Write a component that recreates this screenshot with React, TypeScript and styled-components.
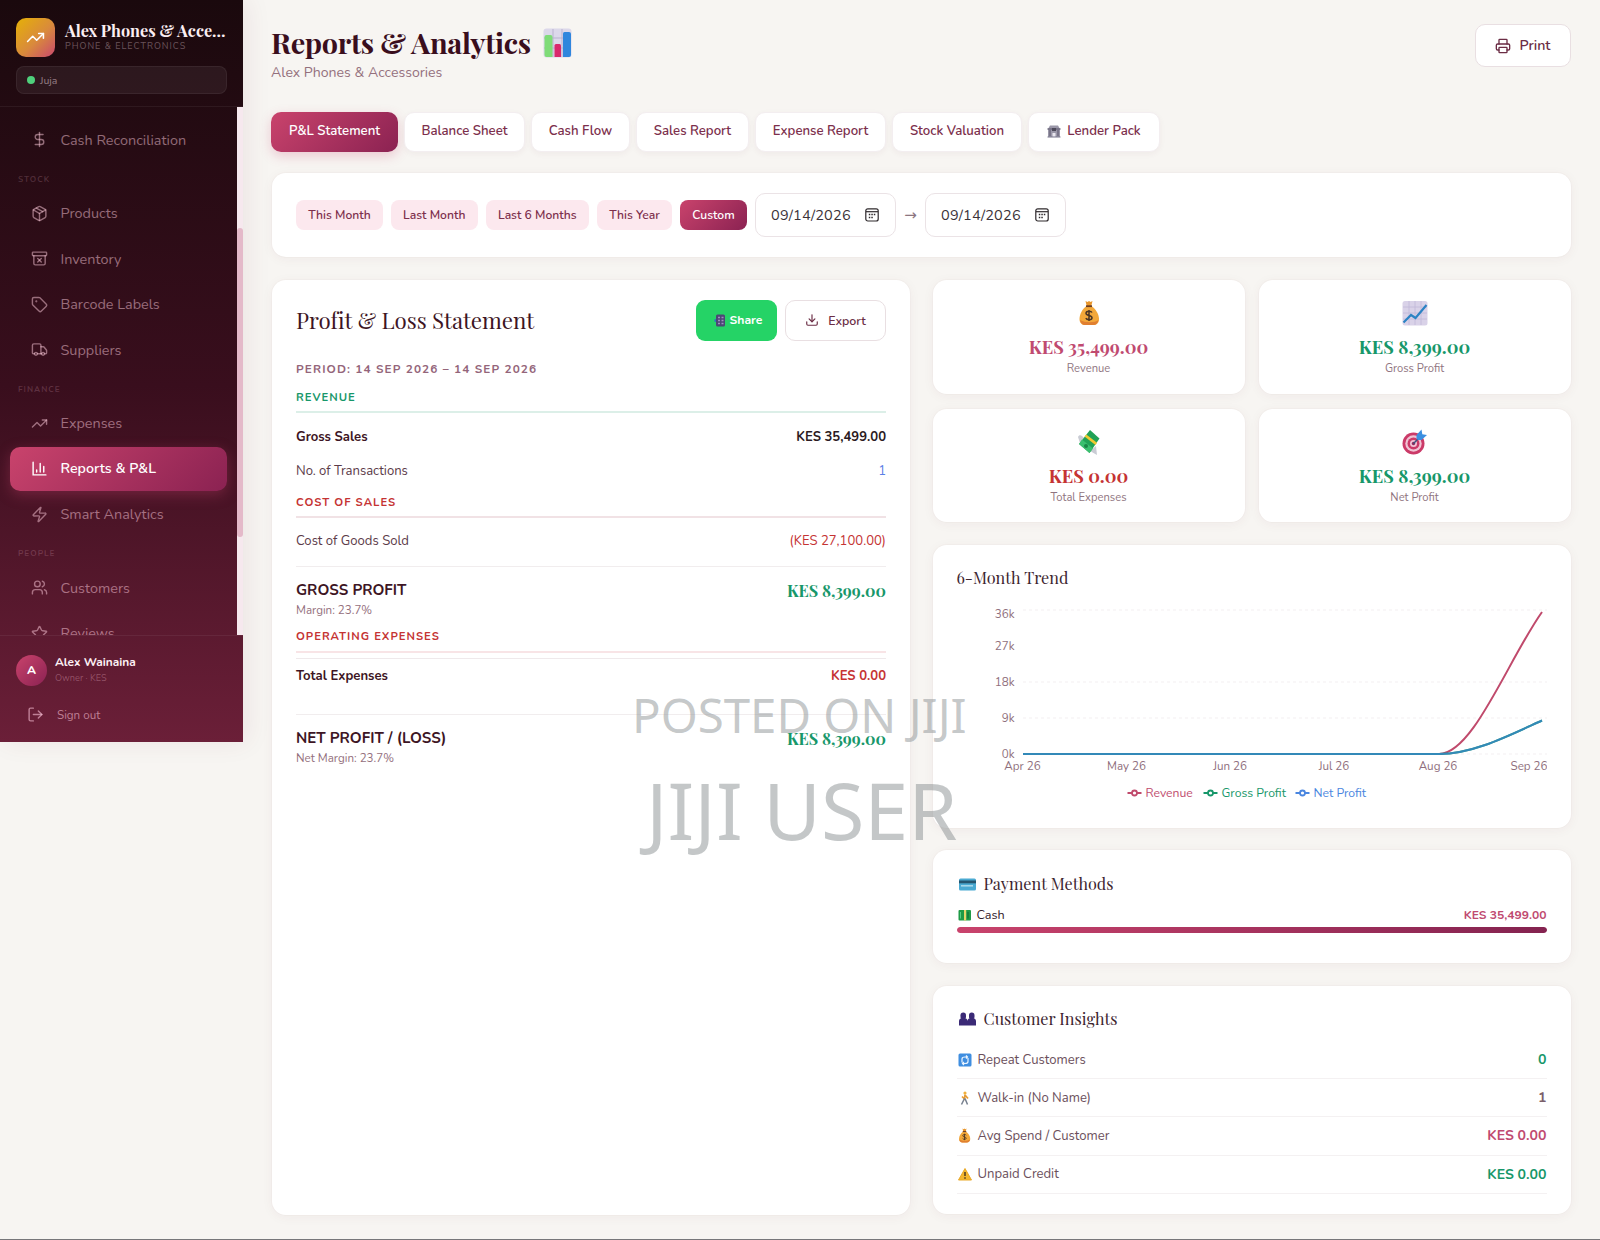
import React from 'react';
import styled, { createGlobalStyle, css } from 'styled-components';
import {
    ArchiveX, DollarSign, Download, LogOut, Package, Printer, Star, Tag, TrendingUp, Truck, Users, Zap
} from 'lucide-react';

const sans = `Nunito, Lato, "Open Sans", sans-serif`;
const serif = `"Playfair Display", "Liberation Serif", serif`;

const GlobalStyle = createGlobalStyle`
    * { box-sizing: border-box; }
    body {
        margin: 0;
        background: #f7f5f2;
        font-family: ${sans};
        color: #3d1524;
    }
    button { font-family: inherit; cursor: pointer; }
    h1, h2, h3, p { margin: 0; }
    svg { display: block; flex: none; }
`;

const Page = styled.div`
    display: flex;
    align-items: flex-start;
    width: 1600px;
    height: 1240px;
    overflow: hidden;
    position: relative;
    border-bottom: 1px solid #77777a;
`;

/* ---------- Sidebar ---------- */

const Sidebar = styled.aside`
    width: 242.5px;
    height: 742px;
    flex: none;
    display: flex;
    flex-direction: column;
    background: linear-gradient(180deg, #1a090d 0%, #390e1d 52%, #6b1f38 100%);
    box-shadow: 4px 0 24px rgba(107, 31, 56, 0.08);
`;

const Brand = styled.div`
    height: 107px;
    flex: none;
    padding: 18px 15.5px 0 16px;
    border-bottom: 1px solid rgba(255, 255, 255, 0.06);
`;

const BrandRow = styled.div`
    display: flex;
    gap: 10px;
    height: 39px;
`;

const Logo = styled.div`
    width: 39px;
    height: 39px;
    flex: none;
    border-radius: 10px;
    display: flex;
    align-items: center;
    justify-content: center;
    color: #fff;
    background: linear-gradient(135deg, #e3aa10 10%, #d98a3c 55%, #c9486e 100%);
`;

const BrandName = styled.div`
    font: 700 16.2px/21px ${serif};
    color: #fbeef2;
    padding-top: 2px;
    white-space: nowrap;
`;

const BrandKind = styled.div`
    font-size: 9px;
    line-height: 10px;
    letter-spacing: 1px;
    color: rgba(255, 225, 235, 0.35);
    white-space: nowrap;
`;

const Branch = styled.div`
    height: 28px;
    margin-top: 9px;
    padding: 0 10px;
    display: flex;
    align-items: center;
    gap: 5px;
    border: 1px solid rgba(255, 255, 255, 0.06);
    border-radius: 8px;
    background: rgba(255, 255, 255, 0.06);
    color: rgba(255, 225, 235, 0.5);
    font-size: 10.5px;
`;

const Dot = styled.i`
    width: 8px;
    height: 8px;
    border-radius: 50%;
    background: #4fd07c;
`;

const NavScroll = styled.div`
    height: 528px;
    display: flex;
    overflow: hidden;
`;

const Nav = styled.nav`
    flex: 1;
    padding: 11px 9px 0 10px;
`;

const ScrollTrack = styled.div`
    width: 5.5px;
    padding-top: 121px;
    background: #f6e8ee;
`;

const ScrollThumb = styled.div`
    height: 309px;
    border-radius: 3px;
    background: #e4b9c9;
`;

const NavGroup = styled.div`
    height: 28px;
    padding: 10px 8px 0;
    font-size: 8.2px;
    font-weight: 700;
    line-height: 12px;
    letter-spacing: 1px;
    color: rgba(255, 200, 220, 0.19);
`;

const NavItem = styled.a<{ $active?: boolean }>`
    display: flex;
    align-items: center;
    gap: 12.5px;
    height: 43.5px;
    margin-bottom: 2px;
    padding: 0 21px;
    width: 217px;
    border-radius: 10px;
    font-size: 14.4px;
    color: rgba(255, 205, 222, 0.5);
    ${p => p.$active && css`
        color: #fff;
        font-size: 14.2px;
        font-weight: 600;
        background: linear-gradient(135deg, #c9436c 0%, #8b2252 100%);
        box-shadow: 0 4px 14px rgba(201, 67, 108, 0.35);
    `}
`;

const UserBox = styled.div`
    flex: 1;
    padding: 18px 16px 0;
    border-top: 1px solid rgba(255, 255, 255, 0.06);
`;

const UserRow = styled.div`
    display: flex;
    align-items: center;
    gap: 8px;
    height: 32px;
`;

const Avatar = styled.div`
    width: 31px;
    height: 31px;
    border-radius: 50%;
    display: flex;
    align-items: center;
    justify-content: center;
    background: linear-gradient(135deg, #c9436c, #8b2252);
    color: #fff;
    font-size: 12px;
    font-weight: 800;
`;

const UserName = styled.div`
    font-size: 11.9px;
    font-weight: 700;
    line-height: 17px;
    color: #fdf0f4;
`;

const UserRole = styled.div`
    font-size: 9.2px;
    line-height: 15px;
    color: rgba(255, 200, 220, 0.33);
`;

const SignOut = styled.div`
    display: flex;
    align-items: center;
    gap: 13px;
    margin-top: 18.5px;
    padding-left: 11px;
    font-size: 11.6px;
    height: 20px;
    color: rgba(255, 200, 220, 0.58);
`;

/* ---------- Main ---------- */

const Main = styled.main`
    flex: 1;
    padding: 24px 29px 0 28.5px;
`;

const PageHead = styled.header`
    display: flex;
    justify-content: space-between;
    height: 88px;
`;

const Title = styled.h1`
    display: flex;
    align-items: center;
    gap: 12px;
    height: 37px;
    font: 700 28.8px/37px ${serif};
    letter-spacing: -0.3px;
    color: #3a0e1d;
`;

const Subtitle = styled.p`
    font-size: 14.1px;
    line-height: 23px;
    color: #94707d;
`;

const OutlineButton = styled.button<{ $w: number; $h: number }>`
    width: ${p => p.$w}px;
    height: ${p => p.$h}px;
    display: flex;
    align-items: center;
    justify-content: center;
    gap: ${p => (p.$h > 42 ? 8 : 9)}px;
    border: 1px solid #e9dfe2;
    border-radius: 10px;
    background: #fff;
    color: #6b2d45;
    font-size: ${p => (p.$h > 42 ? 14.2 : 12.4)}px;
    font-weight: 600;
`;

const Tabs = styled.div`
    display: flex;
    gap: 6px;
    height: 39.5px;
`;

const Tab = styled.button<{ $w: number; $active?: boolean }>`
    width: ${p => p.$w}px;
    display: flex;
    align-items: center;
    justify-content: center;
    gap: 6px;
    padding: 0 0 2px;
    border: 1px solid #f3eef0;
    border-radius: 10px;
    background: #fff;
    color: #7c2f4c;
    font-size: 13.2px;
    font-weight: 600;
    white-space: nowrap;
    box-shadow: 0 2px 6px rgba(107, 31, 56, 0.05);
    ${p => p.$active && css`
        border: 0;
        color: #fff;
        background: linear-gradient(135deg, #c9436c 0%, #8b2252 100%);
        box-shadow: 0 4px 12px rgba(201, 67, 108, 0.25);
    `}
`;

const Card = styled.section`
    background: #fff;
    border-radius: 14px;
    box-shadow: 0 0 0 1px rgba(107, 31, 56, 0.02), 0 2px 12px rgba(107, 31, 56, 0.05);
`;

const FilterBar = styled(Card)`
    display: flex;
    align-items: center;
    height: 84px;
    margin: 21.5px 0 22.5px 1px;
    padding: 0 24px;
`;

const Chip = styled.button<{ $w: number; $active?: boolean }>`
    width: ${p => p.$w}px;
    height: 30px;
    margin-right: 8px;
    padding: 0;
    border: 0;
    border-radius: 8px;
    background: ${p => (p.$active ? 'linear-gradient(135deg, #c9436c, #8b2252)' : '#fce8ee')};
    color: ${p => (p.$active ? '#fff' : '#7c2f4c')};
    font-size: 12.1px;
    font-weight: 600;
    white-space: nowrap;
`;

const DateBox = styled.div`
    width: 141px;
    height: 44px;
    display: flex;
    align-items: center;
    justify-content: space-between;
    padding: 0 16px 0 15px;
    border: 1px solid #ebe3e6;
    border-radius: 10px;
    color: #3b3238;
    font-size: 14.5px;
    letter-spacing: 0.2px;
`;

const Arrow = styled.span`
    width: 29px;
    text-align: center;
    font: 15px/1 "DejaVu Sans", sans-serif;
    color: #8c7580;
`;

const Columns = styled.div`
    display: grid;
    grid-template-columns: 638px 638px;
    gap: 22.5px;
    margin-left: 1px;
`;

const Statement = styled(Card)`
    height: 935px;
    padding: 20px 24px;
`;

const StatementHead = styled.div`
    display: flex;
    align-items: center;
    gap: 8px;
    height: 41px;
`;

const StatementTitle = styled.h2`
    flex: 1;
    font: 400 22.3px/40px ${serif};
    letter-spacing: -0.05px;
    color: #3d1524;
`;

const ShareButton = styled.button`
    width: 81px;
    height: 41px;
    display: flex;
    align-items: center;
    justify-content: center;
    gap: 4px;
    padding: 0 0 0 3px;
    border: 0;
    border-radius: 9px;
    background: #25d366;
    color: #fff;
    font-size: 12.2px;
    font-weight: 700;
`;

const Period = styled.p`
    margin-top: 17px;
    font-size: 11.8px;
    font-weight: 700;
    line-height: 22px;
    letter-spacing: 1.1px;
    color: #94657a;
`;

const tones = {
    dark: '#2b1a22',
    green: '#17976a',
    red: '#c53333',
    rose: '#c04a70',
    blue: '#5b7fe6',
    brown: '#7b5f6a'
};
type Tone = keyof typeof tones;

const GroupHead = styled.h3<{ $tone: Tone; $line: string; $gap: number }>`
    height: 26.5px;
    margin-top: ${p => p.$gap}px;
    border-bottom: 2px solid ${p => p.$line};
    font-size: 11.3px;
    font-weight: 700;
    line-height: 21px;
    letter-spacing: 1px;
    color: ${p => tones[p.$tone]};
`;

const Line = styled.div<{ $bold?: boolean; $top?: number; $rule?: boolean }>`
    display: flex;
    justify-content: space-between;
    align-items: center;
    height: ${p => (p.$rule ? 35 : 34)}px;
    margin-top: ${p => p.$top || 0}px;
    border-top: ${p => (p.$rule ? '1px solid #efe9eb' : '0')};
    font-size: 13.1px;
    font-weight: ${p => (p.$bold ? 700 : 400)};
    color: ${p => (p.$bold ? '#3d1524' : '#5b3a48')};
`;

const Amount = styled.span<{ $tone: Tone }>`
    color: ${p => tones[p.$tone]};
`;

const Total = styled.div<{ $top: number }>`
    height: 54px;
    margin-top: ${p => p.$top}px;
    padding-top: 12px;
    border-top: 1px solid #f1edee;
`;

const TotalRow = styled.div`
    display: flex;
    justify-content: space-between;
    font-size: 15.1px;
    font-weight: 700;
    line-height: 22px;
    color: #3d1524;
`;

const TotalAmount = styled.span`
    font: 700 16.2px/22px ${serif};
    color: ${tones.green};
`;

const TotalNote = styled.div`
    margin-top: 1px;
    font-size: 11.6px;
    line-height: 17px;
    color: #94707d;
`;

const Side = styled.div`
    display: flex;
    flex-direction: column;
`;

const KpiGrid = styled.div`
    display: grid;
    grid-template-columns: 312px 312px;
    grid-template-rows: 114px 113.5px;
    gap: 15px 14px;
`;

const Kpi = styled(Card)`
    display: flex;
    flex-direction: column;
    align-items: center;
    padding-top: 20px;
`;

const KpiValue = styled.div<{ $tone: Tone }>`
    margin-top: 8px;
    font: 700 18.2px/26px ${serif};
    color: ${p => tones[p.$tone]};
`;

const KpiLabel = styled.div`
    font-size: 11.2px;
    line-height: 17px;
    color: #8f7480;
`;

const Panel = styled(Card)<{ $h: number }>`
    height: ${p => p.$h}px;
    margin-top: 22.5px;
    padding: 20px 24px 0;
`;

const PanelTitle = styled.h3`
    display: flex;
    align-items: center;
    gap: 7px;
    height: 25px;
    font: 400 16.2px/24px ${serif};
    color: #3d2530;
`;

const Chart = styled.svg`
    font-family: ${sans};
    font-size: 11.6px;
`;

const Method = styled.div`
    display: flex;
    justify-content: space-between;
    align-items: center;
    height: 20px;
    margin-top: 9.5px;
    font-size: 12.6px;
    color: #33202a;
`;

const Label = styled.span`
    display: flex;
    align-items: center;
    gap: 6px;
`;

const MethodAmount = styled.span`
    font-size: 12.1px;
    font-weight: 700;
    color: ${tones.rose};
`;

const BarTrack = styled.div`
    height: 6px;
    margin-top: 2.5px;
    border-radius: 3px;
    background: #fce8ee;
    overflow: hidden;
`;

const BarFill = styled.div`
    height: 100%;
    border-radius: 3px;
    background: linear-gradient(90deg, #c9436c, #842350);
`;

const InsightList = styled.div`
    margin-top: 10.5px;
`;

const Insight = styled.div`
    display: flex;
    justify-content: space-between;
    align-items: center;
    height: 38.2px;
    border-bottom: 1px solid #f4f1f2;
    font-size: 13.1px;
    color: #6b4f5b;
`;

const InsightValue = styled.b<{ $tone: Tone }>`
    font-size: 14.1px;
    font-weight: 700;
    color: ${p => tones[p.$tone]};
`;

const Watermark = styled.div<{ $x: number; $y: number; $size: number }>`
    position: absolute;
    left: ${p => p.$x}px;
    top: ${p => p.$y}px;
    font: 400 ${p => p.$size}px/1 "Noto Sans", sans-serif;
    color: rgba(142, 147, 150, 0.52);
    white-space: nowrap;
    pointer-events: none;
`;

/* ---------- Drawings ---------- */

const BarsIcon = ({ size = 17 }: { size?: number }) => (
    <svg width={size} height={size} viewBox="0 0 24 24" fill="none" stroke="currentColor" strokeWidth="2" strokeLinecap="round">
        <path d="M3 3v18h18M8 17v-3M13 17V5M18 17V9" />
    </svg>
);

const CalendarIcon = () => (
    <svg width="14" height="14" viewBox="0 0 14 14" fill="none" stroke="#2f2a2d">
        <rect x="0.8" y="0.8" width="12.4" height="12.2" rx="2" strokeWidth="1.2" />
        <path d="M1 3.7h12" strokeWidth="1.2" />
        <path d="M3.8 6.6h1.5M6.3 6.6h1.5M8.8 6.6h1.5M3.8 9.4h1.5M6.3 9.4h1.5" strokeWidth="1.5" />
    </svg>
);

const BarsEmoji = () => (
    <svg width="29" height="30" viewBox="0 0 29 30">
        <rect x="0.5" y="0.5" width="28" height="29" rx="3" fill="#dcd8ea" />
        <path d="M1 10h27M1 20h27M10 1v28M19 1v28" stroke="#b9b2cf" />
        <path d="M1.5 9q0-2 2-2h4q2 0 2 2v20h-6q-2 0-2-2z" fill="#7fdc78" />
        <path d="M11.500 17.500q0-1.500 1.500-1.500h3.500q1.500 0 1.500 1.500v11.500h-6.500z" fill="#d9296d" />
        <path d="M20 5.500q0-1.500 1.500-1.500h4.500q2 0 2 2v21q0 2-2 2h-6z" fill="#2f86dd" />
    </svg>
);

const BagEmoji = ({ size = 26 }: { size?: number }) => (
    <svg width={size} height={size} viewBox="0 0 26 26">
        <path d="M9.5 1l2 1 1.500-1 1.500 1 2-1-1.200 5h-4.600z" fill="#e8962c" />
        <path d="M10.500 6h5c4 3 7.500 8 7.500 13 0 4-2.500 6-5.500 6H9c-3 0-5.500-2-5.500-6 0-5 3-10 7-13z" fill="#f3a83a" />
        <path d="M4 20c1 4 3 5 5 5h8c3 0 5-2 5.500-5-4 3-13 3-18.500 0z" fill="#e07f31" />
        <path d="M10 6.200h6" stroke="#6b3c22" strokeWidth="1.800" />
        <path d="M16 12.500c-1-1.800-6-1.800-6 .8 0 2.800 6 1.600 6 4.400 0 2.600-5 2.600-6.200.5M13 10v11" fill="none" stroke="#4a3524" strokeWidth="1.500" />
    </svg>
);

const TrendEmoji = () => (
    <svg width="26" height="26" viewBox="0 0 26 26">
        <rect x="0.5" y="1" width="25" height="24.500" rx="2.500" fill="#d9d2e8" />
        <path d="M7 1v24M13 1v24M19 1v24M1 7h24M1 13h24M1 19h24" stroke="#c0b7d8" strokeWidth="0.800" />
        <path d="M1.500 22.500L9 15l4.500 3L24.500 5" fill="none" stroke="#2c83c4" strokeWidth="2.200" />
    </svg>
);

const WingsEmoji = () => (
    <svg width="26" height="26" viewBox="0 0 26 26">
        <path d="M2 8c1-3 4-2 6 1l-4 5zM14 22l7 4-1-9z" fill="#c9ccd4" />
        <path d="M14 1l9.500 8.500L13.500 24l-10.500-9z" fill="#21a256" />
        <path d="M3 15L6 10.500l11 9-3.500 4.500z" fill="#3bbf6f" />
        <path d="M8.500 7.500l11 8.500 1.500-2.200L10.300 5.500z" fill="#f0c930" />
        <circle cx="10" cy="17" r="2" fill="#1b8747" />
    </svg>
);

const TargetEmoji = () => (
    <svg width="26" height="26" viewBox="0 0 26 26">
        <circle cx="11.500" cy="14.500" r="11" fill="#cb3a68" />
        <circle cx="11.500" cy="14.500" r="8.200" fill="#f0c3d4" />
        <circle cx="11.500" cy="14.500" r="6" fill="#cb3a68" />
        <circle cx="11.500" cy="14.500" r="3.500" fill="#f0c3d4" />
        <circle cx="11.500" cy="14.500" r="1.700" fill="#8f2b5d" />
        <path d="M11.500 14.500L20 6" stroke="#39557f" strokeWidth="1.500" />
        <path d="M14.500 9.500V6L19.500 .5l.8 4.700 4.700.8-5.500 5h-3.500z" fill="#3b8fe0" />
    </svg>
);

const BankEmoji = () => (
    <svg width="14" height="14" viewBox="0 0 14 14">
        <path d="M1 5l2-3.500h8L13 5v8H1z" fill="#9a97a8" />
        <path d="M0.500 5h13M3 6v6M11 6v6" stroke="#6d6a7d" strokeWidth="1.500" />
        <rect x="5" y="4" width="4" height="3" fill="#4d4a5a" />
        <rect x="5.500" y="9" width="3" height="4" fill="#e9e7ef" />
        <path d="M0.500 13h13" stroke="#77748a" />
    </svg>
);

const PhoneEmoji = () => (
    <svg width="12" height="13" viewBox="0 0 12 13">
        <path d="M0.500 6.500h3" stroke="#3267c9" strokeWidth="2.500" />
        <rect x="2" y="0.500" width="9" height="12" rx="1.500" fill="#4b4775" />
        <path d="M4 3.500h2M7.500 3.500h2M4 6.500h2M7.500 6.500h2M4 9.500h2M7.500 9.500h2" stroke="#a08dc0" strokeWidth="1.300" />
    </svg>
);

const CardEmoji = () => (
    <svg width="20" height="16" viewBox="0 0 20 16">
        <rect x="2" y="3.500" width="17" height="12" rx="1.500" fill="#4aaad2" />
        <rect x="2" y="5.500" width="17" height="2.800" fill="#24566f" />
        <rect x="4" y="10" width="12" height="1.600" fill="#a5d8ea" />
    </svg>
);

const CashEmoji = () => (
    <svg width="14" height="13" viewBox="0 0 14 13">
        <rect x="1.500" y="2" width="12.500" height="10.500" rx="1" fill="#1f9b46" />
        <rect x="7" y="2" width="2.200" height="10.500" fill="#e4d66a" />
        <path d="M11 4v6.500" stroke="#14793a" strokeWidth="1.500" />
        <path d="M3.500 4v6.500" stroke="#59cf80" />
    </svg>
);

const PeopleEmoji = () => (
    <svg width="20" height="16" viewBox="0 0 20 16">
        <g fill="#3b2a76">
            <path d="M2 15.500V11q0-3 4.300-3T10.500 11v4.500zM10.500 15.500V11q0-3 4.200-3T19 11v4.500z" />
            <rect x="3.500" y="2.500" width="5.500" height="7" rx="2.700" />
            <rect x="12" y="2.500" width="5.500" height="7" rx="2.700" />
        </g>
    </svg>
);

const RepeatEmoji = () => (
    <svg width="15" height="14" viewBox="0 0 15 14">
        <rect x="1.500" y="0.500" width="13" height="13" rx="1.500" fill="#3f8ee0" />
        <path d="M5 9.500V6q0-2 3-2h2M9 2.500L10.500 4 9 5.500M11 5v3.500q0 2-3 2H6M7 9L5.500 10.500 7 12" fill="none" stroke="#eaf4ff" strokeWidth="1.200" />
    </svg>
);

const WalkEmoji = () => (
    <svg width="15" height="14" viewBox="0 0 15 14">
        <circle cx="8" cy="2" r="1.600" fill="#f0b13c" />
        <path d="M8 3.500L7.500 8 5 5.500M8 4l3 3.500" stroke="#e79b34" strokeWidth="1.700" fill="none" />
        <path d="M7.500 7.500l-3 6M8 7.500l2.500 6" stroke="#77808f" strokeWidth="1.500" fill="none" />
    </svg>
);

const WarnEmoji = () => (
    <svg width="15" height="14" viewBox="0 0 15 14">
        <path d="M8 1.500L14.500 13h-13z" fill="#f3b62f" stroke="#e9a928" strokeLinejoin="round" />
        <path d="M8 5v4M8 10.300v1.500" stroke="#4c3a23" strokeWidth="1.500" />
    </svg>
);

/* ---------- Data ---------- */

const nav: { group?: string; label?: string; icon?: React.ReactNode; active?: boolean }[] = [
    { label: 'Cash Reconciliation', icon: <DollarSign size={17} /> },
    { group: 'STOCK' },
    { label: 'Products', icon: <Package size={17} /> },
    { label: 'Inventory', icon: <ArchiveX size={17} /> },
    { label: 'Barcode Labels', icon: <Tag size={17} /> },
    { label: 'Suppliers', icon: <Truck size={17} /> },
    { group: 'FINANCE' },
    { label: 'Expenses', icon: <TrendingUp size={17} /> },
    { label: 'Reports & P&L', icon: <BarsIcon />, active: true },
    { label: 'Smart Analytics', icon: <Zap size={17} /> },
    { group: 'PEOPLE' },
    { label: 'Customers', icon: <Users size={17} /> },
    { label: 'Reviews', icon: <Star size={17} /> }
];

const tabs = [
    { label: 'P&L Statement', w: 127 },
    { label: 'Balance Sheet', w: 121 },
    { label: 'Cash Flow', w: 99 },
    { label: 'Sales Report', w: 113 },
    { label: 'Expense Report', w: 131 },
    { label: 'Stock Valuation', w: 130 },
    { label: 'Lender Pack', w: 132, icon: <BankEmoji /> }
];

const ranges = [
    { label: 'This Month', w: 87 },
    { label: 'Last Month', w: 86.5 },
    { label: 'Last 6 Months', w: 103.5 },
    { label: 'This Year', w: 75 },
    { label: 'Custom', w: 67 }
];

const kpis: { label: string; value: string; tone: Tone; icon: React.ReactNode }[] = [
    { label: 'Revenue', value: 'KES 35,499.00', tone: 'rose', icon: <BagEmoji /> },
    { label: 'Gross Profit', value: 'KES 8,399.00', tone: 'green', icon: <TrendEmoji /> },
    { label: 'Total Expenses', value: 'KES 0.00', tone: 'red', icon: <WingsEmoji /> },
    { label: 'Net Profit', value: 'KES 8,399.00', tone: 'green', icon: <TargetEmoji /> }
];

const insights: { label: string; value: string; tone: Tone; icon: React.ReactNode }[] = [
    { label: 'Repeat Customers', value: '0', tone: 'green', icon: <RepeatEmoji /> },
    { label: 'Walk-in (No Name)', value: '1', tone: 'brown', icon: <WalkEmoji /> },
    { label: 'Avg Spend / Customer', value: 'KES 0.00', tone: 'rose', icon: <BagEmoji size={15} /> },
    { label: 'Unpaid Credit', value: 'KES 0.00', tone: 'green', icon: <WarnEmoji /> }
];

const payments = [{ label: 'Cash', value: 'KES 35,499.00', share: 100 }];

const yTicks = [
    { label: '36k', y: 24 }, { label: '27k', y: 56 }, { label: '18k', y: 92 }, { label: '9k', y: 128 }, { label: '0k', y: 164 }
];
const months = [
    { label: 'Apr 26', x: 65.5 }, { label: 'May 26', x: 169.5 }, { label: 'Jun 26', x: 273 },
    { label: 'Jul 26', x: 377 }, { label: 'Aug 26', x: 481 }, { label: 'Sep 26', x: 572 }
];
const legend = [
    { label: 'Revenue', color: '#c04a6c', x: 170.5 },
    { label: 'Gross Profit', color: '#17976a', x: 246.5 },
    { label: 'Net Profit', color: '#4a86e0', x: 338.5 }
];

const TrendChart = () => (
    <Chart width="590" height="225" viewBox="0 0 590 225">
        {[20, 92, 128, 164].map(y => (
            <line key={y} x1="66" x2="590" y1={y} y2={y} stroke="#f3eff1" strokeDasharray="3 3" />
        ))}
        {yTicks.map(t => (
            <text key={t.label} x="57.5" y={t.y + 4} textAnchor="end" fill="#8f6f7d">{t.label}</text>
        ))}
        {months.map(m => (
            <text key={m.label} x={m.x} y="179.5" textAnchor="middle" fill="#8f6f7d">{m.label}</text>
        ))}
        <g fill="none" strokeWidth="2">
            <path d="M66 164H482C516 164 551 70 585 22" stroke="#c04a6c" />
            <path d="M66 164H482C516 164 551 146 585 130.500" stroke="#17976a" />
            <path d="M66 164H482C516 164 551 146 585 130.500" stroke="#3a86cc" strokeOpacity="0.800" />
        </g>
        {legend.map(l => (
            <g key={l.label}>
                <path d={`M${l.x} 203h4.500m5 0h4.500`} stroke={l.color} strokeWidth="2" />
                <circle cx={l.x + 7} cy="203" r="2.5" fill="none" stroke={l.color} strokeWidth="1.8" />
                <text x={l.x + 18} y="207" fontSize="12.2" fill={l.color}>{l.label}</text>
            </g>
        ))}
    </Chart>
);

const App: React.FC = () => (
    <Page>
        <GlobalStyle />
        <Sidebar>
            <Brand>
                <BrandRow>
                    <Logo><TrendingUp size={19} /></Logo>
                    <div>
                        <BrandName>Alex Phones &amp; Acce…</BrandName>
                        <BrandKind>PHONE &amp; ELECTRONICS</BrandKind>
                    </div>
                </BrandRow>
                <Branch><Dot />Juja</Branch>
            </Brand>
            <NavScroll>
                <Nav>
                    {nav.map(n => n.group
                        ? <NavGroup key={n.group}>{n.group}</NavGroup>
                        : <NavItem key={n.label} $active={n.active}>{n.icon}{n.label}</NavItem>
                    )}
                </Nav>
                <ScrollTrack><ScrollThumb /></ScrollTrack>
            </NavScroll>
            <UserBox>
                <UserRow>
                    <Avatar>A</Avatar>
                    <div>
                        <UserName>Alex Wainaina</UserName>
                        <UserRole>Owner · KES</UserRole>
                    </div>
                </UserRow>
                <SignOut><LogOut size={17} />Sign out</SignOut>
            </UserBox>
        </Sidebar>

        <Main>
            <PageHead>
                <div>
                    <Title>Reports &amp; Analytics <BarsEmoji /></Title>
                    <Subtitle>Alex Phones &amp; Accessories</Subtitle>
                </div>
                <OutlineButton $w={96} $h={43}><Printer size={16} />Print</OutlineButton>
            </PageHead>

            <Tabs>
                {tabs.map((t, i) => (
                    <Tab key={t.label} $w={t.w} $active={i === 0}>{t.icon}{t.label}</Tab>
                ))}
            </Tabs>

            <FilterBar>
                {ranges.map(r => (
                    <Chip key={r.label} $w={r.w} $active={r.label === 'Custom'}>{r.label}</Chip>
                ))}
                <DateBox>09/14/2026<CalendarIcon /></DateBox>
                <Arrow>→</Arrow>
                <DateBox>09/14/2026<CalendarIcon /></DateBox>
            </FilterBar>

            <Columns>
                <Statement>
                    <StatementHead>
                        <StatementTitle>Profit &amp; Loss Statement</StatementTitle>
                        <ShareButton><PhoneEmoji />Share</ShareButton>
                        <OutlineButton $w={101} $h={41}><Download size={14} />Export</OutlineButton>
                    </StatementHead>
                    <Period>PERIOD: 14 SEP 2026 – 14 SEP 2026</Period>

                    <GroupHead $tone="green" $line="#dcefe8" $gap={7}>REVENUE</GroupHead>
                    <Line $bold $top={6.5}>Gross Sales<Amount $tone="dark">KES 35,499.00</Amount></Line>
                    <Line>No. of Transactions<Amount $tone="blue">1</Amount></Line>

                    <GroupHead $tone="red" $line="#f1e2e5" $gap={4}>COST OF SALES</GroupHead>
                    <Line $top={6}>Cost of Goods Sold<Amount $tone="red">(KES 27,100.00)</Amount></Line>
                    <Total $top={7.5}>
                        <TotalRow>GROSS PROFIT<TotalAmount>KES 8,399.00</TotalAmount></TotalRow>
                        <TotalNote>Margin: 23.7%</TotalNote>
                    </Total>

                    <GroupHead $tone="red" $line="#f8e4e6" $gap={6.5}>OPERATING EXPENSES</GroupHead>
                    <Line $bold $rule $top={5.5}>Total Expenses<Amount $tone="red">KES 0.00</Amount></Line>
                    <Total $top={20.5}>
                        <TotalRow>NET PROFIT / (LOSS)<TotalAmount>KES 8,399.00</TotalAmount></TotalRow>
                        <TotalNote>Net Margin: 23.7%</TotalNote>
                    </Total>
                </Statement>

                <Side>
                    <KpiGrid>
                        {kpis.map(k => (
                            <Kpi key={k.label}>
                                {k.icon}
                                <KpiValue $tone={k.tone}>{k.value}</KpiValue>
                                <KpiLabel>{k.label}</KpiLabel>
                            </Kpi>
                        ))}
                    </KpiGrid>

                    <Panel $h={283}>
                        <PanelTitle>6-Month Trend</PanelTitle>
                        <TrendChart />
                    </Panel>

                    <Panel $h={113}>
                        <PanelTitle><CardEmoji />Payment Methods</PanelTitle>
                        {payments.map(p => (
                            <div key={p.label}>
                                <Method>
                                    <Label><CashEmoji />{p.label}</Label>
                                    <MethodAmount>{p.value}</MethodAmount>
                                </Method>
                                <BarTrack><BarFill style={{ width: `${p.share}%` }} /></BarTrack>
                            </div>
                        ))}
                    </Panel>

                    <Panel $h={228}>
                        <PanelTitle><PeopleEmoji />Customer Insights</PanelTitle>
                        <InsightList>
                            {insights.map(i => (
                                <Insight key={i.label}>
                                    <Label>{i.icon}{i.label}</Label>
                                    <InsightValue $tone={i.tone}>{i.value}</InsightValue>
                                </Insight>
                            ))}
                        </InsightList>
                    </Panel>
                </Side>
            </Columns>
        </Main>

        <Watermark $x={632} $y={691} $size={47.4}>POSTED ON JIJI</Watermark>
        <Watermark $x={646} $y={770} $size={79}>JIJI USER</Watermark>
    </Page>
);

export default App;
